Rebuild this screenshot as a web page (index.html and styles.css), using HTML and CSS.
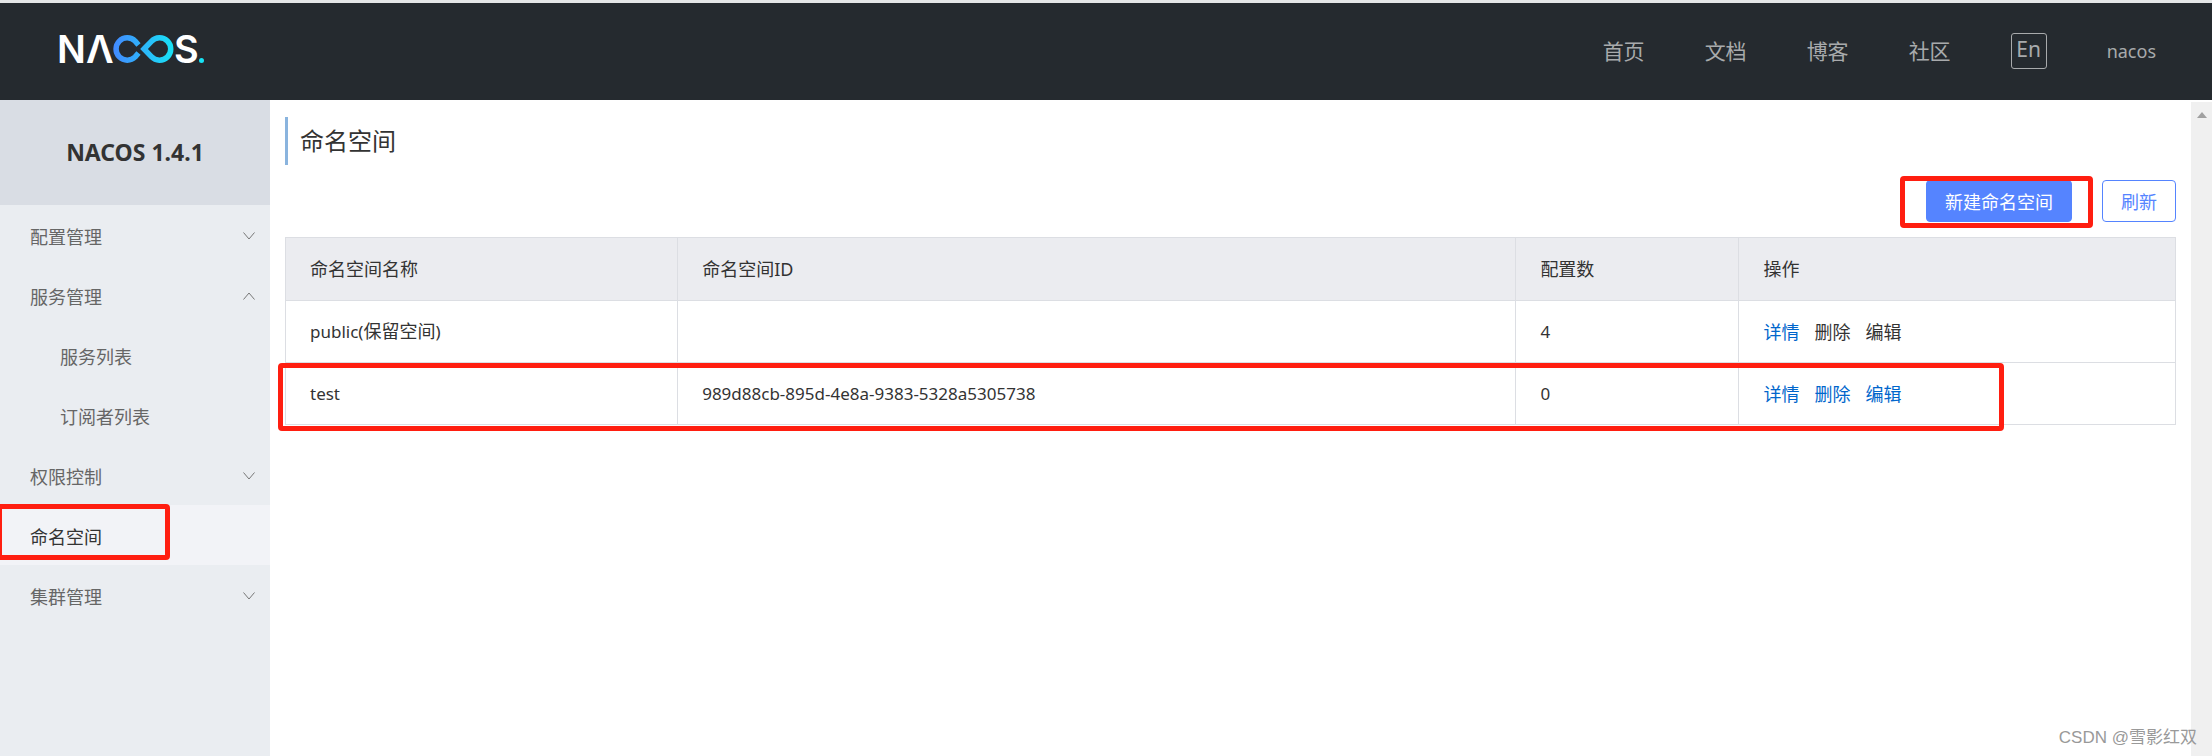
FILE: index.html
```
<!DOCTYPE html>
<html lang="zh-CN">
<head>
    <meta charset="UTF-8">
    <title>Nacos</title>
    <link rel="stylesheet" href="styles.css">
</head>
<body>
    <header class="header">
        <a href="#" class="logo">
            <svg width="154" height="60" viewBox="-4 -14 154 60" role="img" aria-label="NACOS.">
                <defs>
                    <linearGradient id="loop" gradientUnits="userSpaceOnUse" x1="53" y1="0" x2="114" y2="0">
                        <stop offset="0" stop-color="#4389ff"/>
                        <stop offset="1" stop-color="#17e3f5"/>
                    </linearGradient>
                </defs>
                <text class="logo-text" x="-3" y="30">N</text>
                <text class="logo-text" x="26" y="30">Λ</text>
                <g fill="none" stroke="url(#loop)" stroke-width="5.5">
                    <path d="M78.5 12L75.2 8.1A11.2 11.2 0 1 0 75.2 23.9L78.5 20"/>
                    <path d="M84 16L91.4 8.3A11.2 11.2 0 1 1 91.4 23.7Z"/>
                </g>
                <text class="logo-text" x="114" y="30">S</text>
                <circle cx="141.500" cy="27.500" r="2.500" fill="#17e3f5"/>
            </svg>
        </a>
        <nav class="nav">
            <a href="#">首页</a>
            <a href="#">文档</a>
            <a href="#">博客</a>
            <a href="#">社区</a>
            <button type="button" class="lang">En</button>
            <a href="#" class="user">nacos</a>
        </nav>
    </header>
    <div class="main">
        <aside class="sidebar">
            <h1 class="version">NACOS 1.4.1</h1>
            <ul class="menu">
                <li><a href="#">配置管理<svg class="arrow" viewBox="0 0 12 8"><path d="M0.500 0.500L6 7L11.500 0.500"/></svg></a></li>
                <li><a href="#">服务管理<svg class="arrow" viewBox="0 0 12 8"><path d="M0.500 7.500L6 1L11.500 7.500"/></svg></a></li>
                <li><a href="#" class="sub">服务列表</a></li>
                <li><a href="#" class="sub">订阅者列表</a></li>
                <li><a href="#">权限控制<svg class="arrow" viewBox="0 0 12 8"><path d="M0.500 0.500L6 7L11.500 0.500"/></svg></a></li>
                <li class="marked"><a href="#" class="active">命名空间</a><div class="mark mark-menu"></div></li>
                <li><a href="#">集群管理<svg class="arrow" viewBox="0 0 12 8"><path d="M0.500 0.500L6 7L11.500 0.500"/></svg></a></li>
            </ul>
        </aside>
        <main class="content">
            <h2 class="title">命名空间</h2>
            <div class="actions">
                <div class="marked">
                    <button type="button" class="btn primary">新建命名空间</button>
                    <div class="mark mark-button"></div>
                </div>
                <button type="button" class="btn">刷新</button>
            </div>
            <div class="marked">
                <table>
                    <thead>
                        <tr>
                            <th class="col-name">命名空间名称</th>
                            <th class="col-id">命名空间ID</th>
                            <th class="col-count">配置数</th>
                            <th>操作</th>
                        </tr>
                    </thead>
                    <tbody>
                        <tr>
                            <td><span class="latin">public(</span>保留空间<span class="latin">)</span></td>
                            <td></td>
                            <td class="latin">4</td>
                            <td><div class="ops"><a href="#">详情</a><span>删除</span><span>编辑</span></div></td>
                        </tr>
                        <tr>
                            <td class="latin">test</td>
                            <td class="latin">989d88cb-895d-4e8a-9383-5328a5305738</td>
                            <td class="latin">0</td>
                            <td><div class="ops"><a href="#">详情</a><a href="#">删除</a><a href="#">编辑</a></div></td>
                        </tr>
                    </tbody>
                </table>
                <div class="mark mark-row"></div>
            </div>
        </main>
        <div class="scrollbar"><svg width="10" height="6" viewBox="0 0 10 6"><path d="M0 6L5 0L10 6Z" fill="#a0a0a0"/></svg></div>
    </div>
    <div class="watermark">CSDN @雪影红双</div>
</body>
</html>
```
FILE: styles.css
```
* {
    box-sizing: border-box;
}

body {
    margin: 0;
    min-height: 100vh;
    display: flex;
    flex-direction: column;
    font-family: "Noto Sans", "Noto Sans CJK SC", sans-serif;
    font-size: 18px;
    line-height: 24px;
    color: #333;
    background-color: #fff;
}

a {
    text-decoration: none;
}

button {
    font-family: inherit;
    cursor: pointer;
}

.header {
    display: flex;
    align-items: center;
    justify-content: space-between;
    height: 100px;
    padding: 0 56px 2px;
    border-top: 3px solid #e4e6e7;
    background-color: #252a2f;
}

.logo svg {
    display: block;
}

.logo {
    margin-bottom: 4px;
}

.logo-text {
    font-family: Inter, sans-serif;
    font-size: 38px;
    font-weight: 600;
    fill: #fff;
}

.nav {
    display: flex;
    align-items: center;
    gap: 60px;
}

.nav a {
    font-size: 21px;
    color: #a8aaac;
}

.nav .user {
    font-size: 18px;
}

.lang {
    width: 36px;
    height: 36px;
    padding: 0 0 4px;
    border: 1px solid #a8aaac;
    border-radius: 3px;
    font-size: 21px;
    line-height: 30px;
    color: #a8aaac;
    background: none;
}

.main {
    flex: 1;
    display: flex;
}

.sidebar {
    width: 270px;
    background-color: #eaedf1;
}

.version {
    margin: 0;
    font-size: 23px;
    line-height: 105px;
    text-align: center;
    background-color: #d9dde4;
}

.menu {
    margin: 0;
    padding: 0;
    list-style: none;
}

.menu a {
    display: flex;
    align-items: center;
    justify-content: space-between;
    height: 60px;
    padding: 4px 15px 0 30px;
    color: #666;
}

.menu .sub {
    padding-left: 60px;
}

.menu .active {
    color: #333;
    background-color: #f2f3f7;
}

.arrow {
    width: 12px;
    height: 8px;
    margin-bottom: 3px;
    fill: none;
    stroke: #777;
}

.content {
    flex: 1;
    padding: 17px 15px;
}

.title {
    margin: 0 0 15px;
    padding-left: 12px;
    border-left: 3px solid #8ab4de;
    font-size: 24px;
    font-weight: normal;
    line-height: 48px;
}

.actions {
    display: flex;
    justify-content: flex-end;
    gap: 30px;
    margin-bottom: 15px;
}

.btn {
    display: block;
    height: 42px;
    padding: 0 18px;
    border: 1px solid #5584ff;
    border-radius: 4px;
    font-size: 18px;
    color: #5584ff;
    background-color: #fff;
}

.primary {
    color: #fff;
    background-color: #5584ff;
}

table {
    width: 100%;
    table-layout: fixed;
    border-collapse: collapse;
}

th, td {
    height: 62px;
    padding: 0 24px;
    border: 1px solid #dcdee3;
    font-weight: normal;
    text-align: left;
}

th {
    height: 63px;
    background-color: #ebecf0;
}

.col-name {
    width: 20.75%;
}

.col-id {
    width: 44.35%;
}

.col-count {
    width: 11.8%;
}

.latin {
    font-size: 17px;
}

.ops {
    display: flex;
    gap: 15px;
}

.ops a {
    color: #06c;
}

/* red highlight frames */
.marked {
    position: relative;
}

.mark {
    position: absolute;
    border: 5px solid #ff1e10;
    border-radius: 4px;
    pointer-events: none;
}

.mark-menu {
    top: -1px;
    left: -3px;
    width: 173px;
    height: 56px;
}

.mark-button {
    top: -4px;
    right: -21px;
    bottom: -6px;
    left: -26px;
}

.mark-row {
    right: 172px;
    bottom: -6px;
    left: -7px;
    height: 68px;
}

.scrollbar {
    width: 21px;
    margin-top: 2px;
    padding-top: 6px;
    line-height: 6px;
    text-align: center;
    background-color: #f0f0f0;
}

.watermark {
    position: absolute;
    right: 15px;
    bottom: 6px;
    font-family: "Liberation Sans", "Noto Sans CJK SC", sans-serif;
    font-size: 17px;
    color: #999;
}
```
